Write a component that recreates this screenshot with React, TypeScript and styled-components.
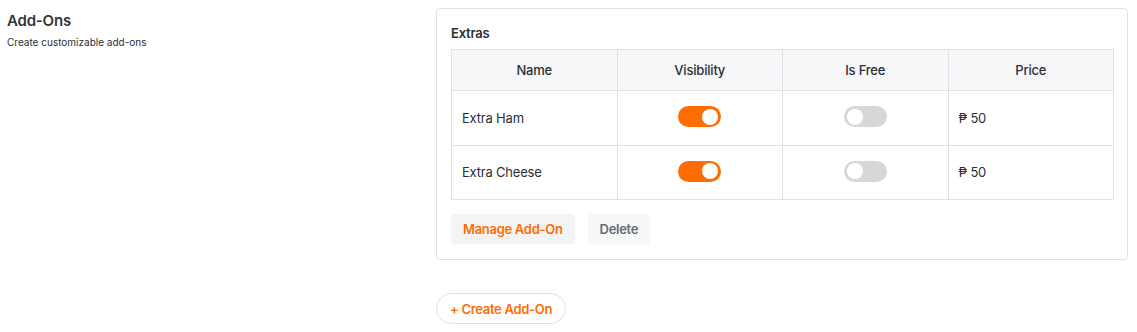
import React from "react";
import styled, { createGlobalStyle } from "styled-components";

const Global = createGlobalStyle`
  html, body { margin: 0; padding: 0; background: #fff; }
  body { font-family: "Inter", "Noto Sans", sans-serif; color: #2b2f36; }
  * { box-sizing: border-box; }
`;

const Page = styled.div`
  display: grid;
  grid-template-columns: 429px 1fr;
  padding: 8px 9px 0 7px;
`;

const Intro = styled.div`
  display: flex;
  flex-direction: column;
  padding-top: 3px;
`;

const Title = styled.h2`
  margin: 0;
  font-size: 15px;
  font-weight: 600;
  line-height: 20px;
  color: #33363b;
  letter-spacing: -0.2px;
`;

const Subtitle = styled.p`
  margin: 4px 0 0;
  font-size: 10px;
  line-height: 14px;
  color: #2b2f36;
`;

const Main = styled.div`
  display: flex;
  flex-direction: column;
  align-items: flex-start;
`;

const Card = styled.section`
  width: 100%;
  border: 1px solid #dfe1e5;
  border-radius: 4px;
  padding: 16px 13px 14px 14px;
`;

const CardTitle = styled.h3`
  margin: 0 0 7px;
  font-size: 13px;
  font-weight: 600;
  line-height: 17px;
  color: #2b2f36;
  letter-spacing: -0.2px;
`;

const Table = styled.table`
  width: 100%;
  border-collapse: collapse;
  table-layout: fixed;
  font-size: 13px;
`;

const Th = styled.th`
  height: 41px;
  background: #f6f7f9;
  border: 1px solid #dfe1e5;
  font-weight: 500;
  color: #2b2f36;
  text-align: center;
  letter-spacing: -0.2px;
`;

const Td = styled.td<{ $align?: "left" | "center" }>`
  height: 54.5px;
  border: 1px solid #dfe1e5;
  padding: 0 10px;
  text-align: ${(p) => p.$align ?? "left"};
  vertical-align: middle;
  color: #2b2f36;
  letter-spacing: -0.2px;
`;

const Toggle = styled.span<{ $on: boolean }>`
  display: inline-flex;
  align-items: center;
  justify-content: ${(p) => (p.$on ? "flex-end" : "flex-start")};
  width: 43px;
  height: 21px;
  border-radius: 11px;
  padding: 0 3px;
  background: ${(p) => (p.$on ? "#ff6d00" : "#d7d7d7")};
  vertical-align: middle;
  margin-top: -2px;
`;

const Knob = styled.span`
  width: 16px;
  height: 16px;
  border-radius: 50%;
  background: #fff;
`;

const Actions = styled.div`
  display: flex;
  align-items: center;
  gap: 13px;
  margin-top: 13px;
`;

const Button = styled.button<{ $variant: "primary" | "muted" }>`
  height: ${(p) => (p.$variant === "primary" ? "30px" : "32px")};
  padding: 0 12px;
  border: none;
  border-radius: 3px;
  font-family: inherit;
  font-size: 13px;
  font-weight: 600;
  letter-spacing: -0.3px;
  background: ${(p) => (p.$variant === "primary" ? "#f3f4f6" : "#f7f8fa")};
  color: ${(p) => (p.$variant === "primary" ? "#ff6d00" : "#646c78")};
`;

const CreateButton = styled.button`
  margin-top: 33px;
  height: 31px;
  padding: 0 13px;
  border: 1px solid #dfe1e5;
  border-radius: 16px;
  background: #fff;
  font-family: inherit;
  font-size: 13px;
  font-weight: 600;
  letter-spacing: -0.3px;
  color: #ff6d00;
`;

const rows = [
  { name: "Extra Ham", visible: true, free: false, price: "₱ 50" },
  { name: "Extra Cheese", visible: true, free: false, price: "₱ 50" },
];

export default function App() {
  return (
    <>
      <Global />
      <Page>
        <Intro>
          <Title>Add-Ons</Title>
          <Subtitle>Create customizable add-ons</Subtitle>
        </Intro>
        <Main>
          <Card>
            <CardTitle>Extras</CardTitle>
            <Table>
              <thead>
                <tr>
                  <Th>Name</Th>
                  <Th>Visibility</Th>
                  <Th>Is Free</Th>
                  <Th>Price</Th>
                </tr>
              </thead>
              <tbody>
                {rows.map((r) => (
                  <tr key={r.name}>
                    <Td>{r.name}</Td>
                    <Td $align="center">
                      <Toggle $on={r.visible}>
                        <Knob />
                      </Toggle>
                    </Td>
                    <Td $align="center">
                      <Toggle $on={r.free}>
                        <Knob />
                      </Toggle>
                    </Td>
                    <Td>{r.price}</Td>
                  </tr>
                ))}
              </tbody>
            </Table>
            <Actions>
              <Button $variant="primary">Manage Add-On</Button>
              <Button $variant="muted">Delete</Button>
            </Actions>
          </Card>
          <CreateButton>+ Create Add-On</CreateButton>
        </Main>
      </Page>
    </>
  );
}
